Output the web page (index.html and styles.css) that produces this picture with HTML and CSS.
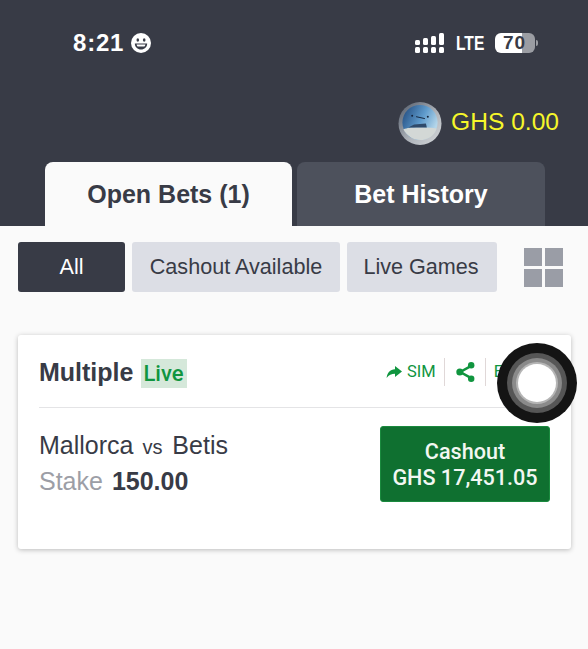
FILE: index.html
```html
<!DOCTYPE html>
<html lang="en">
<head>
    <meta charset="UTF-8">
    <meta name="viewport" content="width=device-width, initial-scale=1.0">
    <title>Open Bets</title>
    <link rel="stylesheet" href="styles.css">
</head>
<body>
    <header class="top">
        <div class="status">
            <div class="status-time">
                <span>8:21</span>
                <svg class="smiley" viewBox="0 0 20 20" width="20" height="20">
                    <circle cx="10" cy="10" r="10" fill="#fff"/>
                    <ellipse cx="6.8" cy="7" rx="1.3" ry="1.7" fill="#383b46"/>
                    <ellipse cx="13.2" cy="7" rx="1.3" ry="1.7" fill="#383b46"/>
                    <path d="M3.8 10.4h12.4c0 3.6-2.8 6-6.2 6s-6.2-2.4-6.2-6z" fill="#383b46"/>
                    <path d="M5.6 11.5h8.8c-.2 1-.5 1.5-1 2H6.6c-.5-.5-.8-1-1-2z" fill="#fff"/>
                </svg>
            </div>
            <div class="status-right">
                <svg class="signal" viewBox="0 0 30 20" width="30" height="20">
                    <rect x="0" y="14" width="5" height="6" rx="1.5" fill="#fff"/>
                    <rect x="8" y="14" width="5" height="6" rx="1.5" fill="#fff"/>
                    <rect x="16" y="14" width="5" height="6" rx="1.5" fill="#fff"/>
                    <rect x="24" y="14" width="5" height="6" rx="1.5" fill="#fff"/>
                    <rect x="0" y="7" width="5" height="5" rx="1.5" fill="#fff"/>
                    <rect x="8" y="5" width="5" height="7" rx="1.5" fill="#fff"/>
                    <rect x="16" y="3" width="5" height="9" rx="1.5" fill="#fff"/>
                    <rect x="24" y="0" width="5" height="12" rx="1.5" fill="#fff"/>
                </svg>
                <span class="lte">LTE</span>
                <div class="battery"><span class="battery-num">70</span></div>
                <div class="battery-tip"></div>
            </div>
        </div>
        <div class="balance">
            <svg class="avatar" viewBox="0 0 44 44" width="44" height="43">
                <defs>
                    <linearGradient id="sky" x1="0" y1="0" x2="1" y2="0.5">
                        <stop offset="0" stop-color="#1c4478"/>
                        <stop offset="0.6" stop-color="#5f9bcc"/>
                        <stop offset="1" stop-color="#b4d6ea"/>
                    </linearGradient>
                    <linearGradient id="rim" x1="0" y1="0" x2="1" y2="1">
                        <stop offset="0" stop-color="#4d5665"/>
                        <stop offset="0.55" stop-color="#aeb3ba"/>
                        <stop offset="1" stop-color="#d7dadc"/>
                    </linearGradient>
                </defs>
                <circle cx="22" cy="22" r="22" fill="url(#rim)"/>
                <circle cx="22" cy="21" r="18" fill="url(#sky)"/>
                <path d="M5 28c6-2 14-3 34-1-2 7-9 12-17 12S8 34 5 28z" fill="#d3d8d6"/>
                <path d="M10 26l6-3 12-1 1 4z" fill="#2f4a6a"/>
                <circle cx="14" cy="14" r="1" fill="#16263e"/>
                <path d="M18 15l9 2" stroke="#16263e" stroke-width="1"/>
                <circle cx="30" cy="15" r="1" fill="#16263e"/>
            </svg>
            <span class="balance-text">GHS 0.00</span>
        </div>
        <nav class="tabs">
            <div class="tab tab-active">Open Bets (1)</div>
            <div class="tab">Bet History</div>
        </nav>
    </header>

    <main class="content">
        <div class="filters">
            <div class="filter filter-all">All</div>
            <div class="filter filter-cash">Cashout Available</div>
            <div class="filter filter-live">Live Games</div>
            <div class="grid-icon">
                <span></span><span></span><span></span><span></span>
            </div>
        </div>

        <section class="card">
            <div class="card-head">
                <div class="card-title">
                    <span class="multiple">Multiple</span>
                    <span class="live">Live</span>
                </div>
                <div class="card-actions">
                    <div class="action action-sim">
                        <svg viewBox="0 0 16 14" width="16" height="14">
                            <path d="M9 1l7 5.5-7 5.5V8.800C5.5 8.800 2.800 10 .6 13 1.200 7.800 4 4.400 9 4.200z" fill="#10953f"/>
                        </svg>
                        <span>SIM</span>
                    </div>
                    <div class="action action-share">
                        <svg viewBox="0 0 20 22" width="19" height="22">
                            <path d="M16 4.500L4.500 11 16 17.500" fill="none" stroke="#10953f" stroke-width="2.600"/>
                            <circle cx="16" cy="4" r="3.400" fill="#10953f"/>
                            <circle cx="4" cy="11" r="3.700" fill="#10953f"/>
                            <circle cx="16" cy="18" r="3.400" fill="#10953f"/>
                        </svg>
                    </div>
                    <div class="action action-more"><span>E</span></div>
                </div>
            </div>
            <div class="card-body">
                <div class="match">
                    <div class="teams">Mallorca <small>vs</small> Betis</div>
                    <div class="stake">Stake <b>150.00</b></div>
                </div>
                <button class="cashout">Cashout<br>GHS 17,451.05</button>
            </div>
        </section>
    </main>

    <div class="touch">
        <div class="touch-dot"></div>
    </div>
</body>
</html>
```

FILE: styles.css
```css
* {
    box-sizing: border-box;
}
html, body {
    height: 100%;
}
body {
    margin: 0;
    font-family: "Liberation Sans", Arial, sans-serif;
    background-color: #fafafa;
    color: #383b46;
    overflow: hidden;
}
.top {
    background-color: #383b46;
    height: 226px;
    display: flex;
    flex-direction: column;
}
.status {
    display: flex;
    justify-content: space-between;
    align-items: center;
    height: 30px;
    margin-top: 28px;
    padding: 0 50px 0 73px;
    color: #fff;
}
.status-time {
    display: flex;
    align-items: center;
    gap: 7px;
    font-size: 24px;
    font-weight: bold;
    letter-spacing: 0.8px;
}
.status-right {
    display: flex;
    align-items: center;
}
.signal {
    margin-right: 11px;
}
.lte {
    display: inline-block;
    width: 29px;
    margin-right: 10px;
    font-size: 20px;
    font-weight: bold;
    transform: scaleX(0.78);
    transform-origin: left center;
}
.battery {
    width: 40px;
    height: 20px;
    border-radius: 6px;
    background: linear-gradient(90deg, #fff 0, #fff 68%, #9b9da3 68%, #9b9da3 100%);
    display: flex;
    align-items: center;
    padding-left: 8px;
}
.battery-num {
    color: #383b46;
    font-size: 19px;
    font-weight: bold;
    letter-spacing: 1px;
}
.battery-tip {
    width: 2px;
    height: 6px;
    margin-left: 1px;
    border-radius: 0 2px 2px 0;
    background-color: #9b9da3;
}
.balance {
    display: flex;
    justify-content: flex-end;
    align-items: center;
    gap: 9px;
    margin-top: 44px;
    padding-right: 29px;
}
.balance-text {
    color: #f6f62a;
    font-size: 24.6px;
    margin-bottom: 3px;
}
.tabs {
    display: flex;
    gap: 5px;
    margin-top: auto;
    padding-left: 45px;
}
.tab {
    width: 248px;
    height: 64px;
    border-radius: 8px 8px 0 0;
    background-color: #4d515c;
    color: #fff;
    font-size: 25px;
    font-weight: bold;
    display: flex;
    align-items: center;
    justify-content: center;
}
.tab-active {
    width: 247px;
    background-color: #fafafa;
    color: #383b46;
}
.content {
    padding: 16px 17px 0 18px;
}
.filters {
    display: flex;
    align-items: center;
    gap: 7px;
}
.filter {
    height: 50px;
    border-radius: 3px;
    background-color: #dcdee5;
    font-size: 21.6px;
    display: flex;
    align-items: center;
    justify-content: center;
}
.filter-all {
    width: 107px;
    background-color: #383b46;
    color: #fff;
}
.filter-cash {
    width: 208px;
}
.filter-live {
    width: 150px;
    padding-right: 2px;
}
.grid-icon {
    display: grid;
    grid-template-columns: 18px 18px;
    grid-auto-rows: 18px;
    gap: 3px;
    margin-left: 20px;
}
.grid-icon span {
    background-color: #9a9da6;
}
.card {
    margin-top: 43px;
    height: 214px;
    padding: 0 21px;
    background-color: #fff;
    border-radius: 3px;
    box-shadow: 0 1px 5px rgba(0, 0, 0, 0.25);
}
.card-head {
    display: flex;
    justify-content: space-between;
    align-items: center;
    height: 73px;
    padding-top: 3px;
    border-bottom: 1px solid #e4e4e6;
}
.card-title {
    display: flex;
    align-items: center;
    gap: 8px;
}
.multiple {
    font-size: 25px;
    font-weight: bold;
}
.live {
    background-color: #d5e8da;
    color: #10953f;
    font-family: Roboto, sans-serif;
    font-weight: 500;
    font-size: 22px;
    margin-top: 1px;
    padding: 2px 4px 2px 2px;
    line-height: 25px;
}
.card-actions {
    display: flex;
    align-items: center;
    width: 164px;
    margin-bottom: 2px;
    color: #10953f;
    font-family: Roboto, sans-serif;
    font-size: 16.5px;
}
.action {
    display: flex;
    align-items: center;
    height: 28px;
}
.action-sim {
    gap: 5px;
    padding-right: 8px;
    border-right: 1px solid #e0d8d8;
}
.action-share {
    padding: 0 10px 0 11px;
    border-right: 1px solid #e0d8d8;
}
.action-more {
    padding-left: 8px;
}
.card-body {
    display: flex;
    justify-content: space-between;
    padding-top: 18px;
}
.teams {
    font-size: 25px;
    margin-top: 5px;
}
.teams small {
    font-size: 20px;
    margin: 0 3px 0 2px;
}
.stake {
    font-size: 25px;
    color: #9c9ea6;
    margin-top: 7px;
}
.stake b {
    color: #383b46;
    margin-left: 2px;
}
.cashout {
    width: 170px;
    height: 76px;
    border: 1px solid #1a8a3e;
    border-radius: 3px;
    background-color: #0f7030;
    color: #f2f7f2;
    font-family: Roboto, sans-serif;
    font-weight: 500;
    font-size: 21.6px;
    line-height: 26px;
    padding: 2px 0 0;
}
.touch {
    position: absolute;
    left: 497px;
    top: 343px;
    width: 80px;
    height: 80px;
    border-radius: 50%;
    background-color: #141414;
    display: flex;
    align-items: center;
    justify-content: center;
}
.touch-dot {
    width: 38px;
    height: 38px;
    border-radius: 50%;
    background-color: #fff;
    box-shadow: 0 0 0 2px #b5b5b5, 0 0 0 6px #8a8a8a, 0 0 0 11px #565656;
}
```
